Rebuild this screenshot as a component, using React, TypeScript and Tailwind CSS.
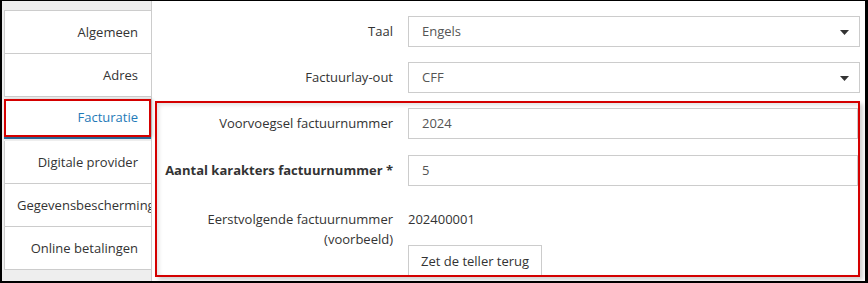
import React from 'react';

const tabs = ['Algemeen', 'Adres', 'Facturatie', 'Digitale provider', 'Gegevensbescherming', 'Online betalingen'];

const Caret = () => (
  <svg width="9" height="5" viewBox="0 0 9 5" className="absolute right-[10px] top-[13px]">
    <path d="M0 0h9L4.5 5z" fill="#333" />
  </svg>
);

const Field = ({ value, select }: { value: string; select?: boolean }) => (
  <div className="relative flex h-[31px] flex-1 items-center border border-[#ccc] bg-white pl-[13px] text-[#555]">
    {value}
    {select && <Caret />}
  </div>
);

const Row = ({ label, children, bold, w }: { label: string; children: React.ReactNode; bold?: boolean; w: string }) => (
  <div className="flex items-center">
    <div className={`${w} shrink-0 text-right ${bold ? 'font-bold' : ''}`}>{label}</div>
    <div className="ml-[15px] flex flex-1">{children}</div>
  </div>
);

export default function App() {
  return (
    <div
      className="flex h-[283px] w-[868px] overflow-hidden border-t border-b-2 border-l-2 border-r-[3px] border-black bg-white text-[13px] text-[#333]"
      style={{ fontFamily: '"Open Sans", "Liberation Sans", sans-serif' }}
    >
      {/* sidebar tabs */}
      <div className="flex w-[150px] shrink-0 flex-col border-r border-[#ccc] bg-[#eee] pt-[9px] pl-[2px]">
        <div className="border-t border-[#ccc]">
          {tabs.map((t) =>
            t === 'Facturatie' ? (
              <div key={t} className="mt-[2px] mb-[2px] border-b-2 border-[#2d6a9a]">
                <div className="flex h-[38px] items-center justify-end border-2 border-[#d40000] bg-white pr-[11px] text-[#1f7ab8] shadow-[2px_0_3px_rgba(0,0,0,0.15)]">
                  {t}
                </div>
              </div>
            ) : (
              <div
                key={t}
                className="h-[43px] overflow-hidden whitespace-nowrap border-b border-l border-[#ccc] bg-white pl-[12px] pr-[13px] text-right leading-[42px]"
              >
                {t}
              </div>
            )
          )}
        </div>
      </div>

      {/* content */}
      <div className="flex flex-1 flex-col pt-[15px] pl-[3px] pr-[5px]">
        <div className="flex flex-col gap-[15px]">
          <Row label="Taal" w="w-[238px]">
            <Field value="Engels" select />
          </Row>
          <Row label="Factuurlay-out" w="w-[238px]">
            <Field value="CFF" select />
          </Row>
        </div>

        <div className="mt-[8px] h-[176px] overflow-hidden border-2 border-[#d40000] pt-[5px] shadow-[3px_3px_4px_rgba(0,0,0,0.18),inset_2px_2px_4px_rgba(0,0,0,0.12)]">
          <div className="flex flex-col gap-[16px]">
            <Row label="Voorvoegsel factuurnummer" w="w-[236px]">
              <Field value="2024" />
            </Row>
            <Row label="Aantal karakters factuurnummer *" bold w="w-[236px]">
              <Field value="5" />
            </Row>
          </div>
          <div className="mt-[16px] flex pt-[7px] leading-[20px]">
            <div className="w-[236px] shrink-0 text-right">
              Eerstvolgende factuurnummer
              <br />
              (voorbeeld)
            </div>
            <div className="ml-[15px] flex flex-col items-start">
              <div>202400001</div>
              <button className="mt-[16px] h-[32px] border border-[#ccc] bg-white px-[12px] text-[#333]">
                Zet de teller terug
              </button>
            </div>
          </div>
        </div>
      </div>
    </div>
  );
}
